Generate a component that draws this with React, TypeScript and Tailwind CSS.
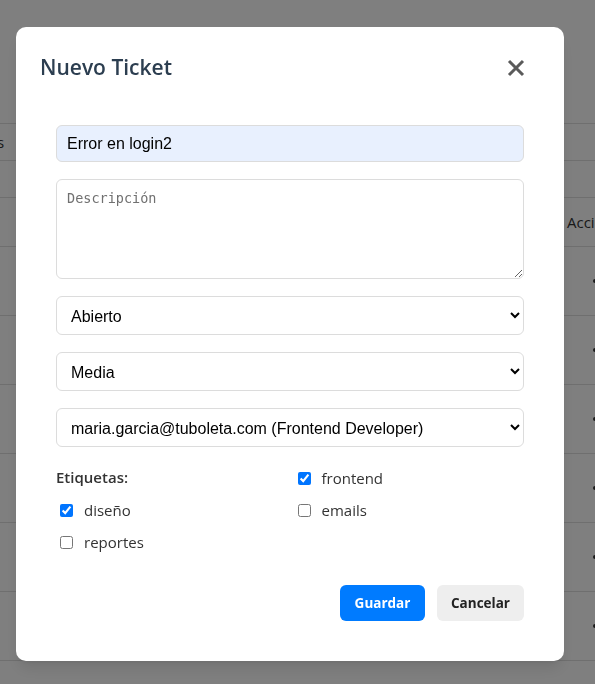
import { useState } from 'react';

const tags = [
    { name: 'frontend', checked: true },
    { name: 'diseño', checked: true },
    { name: 'emails', checked: false },
    { name: 'reportes', checked: false },
];

const BackgroundTable = () => {
    const rows = [0, 1, 2, 3, 4, 5];
    return (
        <div className="min-h-screen w-full bg-white pt-[123px] font-['Open_Sans',sans-serif] text-[#333]">
            <div className="flex h-[38px] items-center border-y border-[#dedede] text-[15px]">
                <span className="-ml-[3px]">s</span>
            </div>
            <div className="h-[37px] border-b border-[#dedede]" />
            <div className="flex h-[49px] items-center justify-end border-b border-[#dedede] text-[15px]">
                <span className="-mr-[12px] w-[40px]">Acciones</span>
            </div>
            {rows.map((r) => (
                <div key={r} className="flex h-[69px] items-center justify-end border-b border-[#dedede]">
                    <span className="mr-[-2px] h-[4px] w-[4px] rounded-full bg-[#333]" />
                </div>
            ))}
        </div>
    );
};

const CloseIcon = () => (
    <svg width="18" height="18" viewBox="0 0 18 18" fill="none" stroke="#5a5a5a" strokeWidth="3" strokeLinecap="butt">
        <path d="M2 2L16 16M16 2L2 16" />
    </svg>
);

const App = () => {
    const [title, setTitle] = useState('Error en login2');
    const [checked, setChecked] = useState<Record<string, boolean>>(
        Object.fromEntries(tags.map((t) => [t.name, t.checked]))
    );

    const fieldBase = "block w-full rounded-[6px] border border-[#dcdcdc] px-[10px] font-['Liberation_Sans',Arial,sans-serif] text-base text-black outline-none";

    return (
        <div className="relative h-[684px] overflow-hidden">
            <BackgroundTable />
            <div className="fixed inset-0 bg-black/50">
                <div className="ml-[16px] mt-[27px] h-[634px] w-[548px] rounded-[10px] bg-white p-6 font-['Open_Sans',sans-serif] shadow-lg">
                    <div className="flex h-[34px] items-center justify-between">
                        <h2 className="text-[21px] font-semibold text-[#2c3e50]">Nuevo Ticket</h2>
                        <button className="mr-[15px] flex items-center justify-center">
                            <CloseIcon />
                        </button>
                    </div>
                    <form className="mt-[24px] p-4" onSubmit={(e) => e.preventDefault()}>
                        <input
                            type="text"
                            value={title}
                            onChange={(e) => setTitle(e.target.value)}
                            className={`${fieldBase} h-[37px] bg-[#e8f0fe]`}
                        />
                        <textarea
                            placeholder="Descripción"
                            className="mt-[17px] block h-[100px] w-full rounded-[6px] border border-[#dcdcdc] px-[10px] py-[8px] font-['DejaVu_Sans_Mono',monospace] text-[13.5px] outline-none placeholder:text-[#707070]"
                        />
                        <select defaultValue="abierto" className={`${fieldBase} mt-[17px] h-[39px] bg-white pt-[1px]`}>
                            <option value="abierto">Abierto</option>
                            <option value="progreso">En progreso</option>
                            <option value="cerrado">Cerrado</option>
                        </select>
                        <select defaultValue="media" className={`${fieldBase} mt-[17px] h-[39px] bg-white pt-[1px]`}>
                            <option value="baja">Baja</option>
                            <option value="media">Media</option>
                            <option value="alta">Alta</option>
                        </select>
                        <select defaultValue="maria" className={`${fieldBase} mt-[17px] h-[39px] bg-white pt-[1px]`}>
                            <option value="maria">maria.garcia@tuboleta.com (Frontend Developer)</option>
                        </select>

                        <div className="mt-[20px] grid grid-cols-2 gap-x-[7px] gap-y-[11px] text-[15px] text-[#333]">
                            <div className="h-[21px] font-semibold leading-[21px]">Etiquetas:</div>
                            {tags.map((t) => (
                                <label key={t.name} className="flex h-[21px] items-center pt-[1px]">
                                    <input
                                        type="checkbox"
                                        checked={checked[t.name]}
                                        onChange={() => setChecked({ ...checked, [t.name]: !checked[t.name] })}
                                        className="ml-1 h-[13px] w-[13px]"
                                    />
                                    <span className="ml-[11px]">{t.name}</span>
                                </label>
                            ))}
                        </div>

                        <div className="mt-[33px] flex justify-end gap-3">
                            <button type="submit" className="h-[36px] w-[85px] rounded-[6px] bg-[#007bff] text-[13.5px] font-bold text-white">
                                Guardar
                            </button>
                            <button type="button" className="h-[36px] w-[87px] rounded-[6px] bg-[#eeeeee] text-[13.5px] font-bold text-[#222]">
                                Cancelar
                            </button>
                        </div>
                    </form>
                </div>
            </div>
        </div>
    );
};

export default App;
